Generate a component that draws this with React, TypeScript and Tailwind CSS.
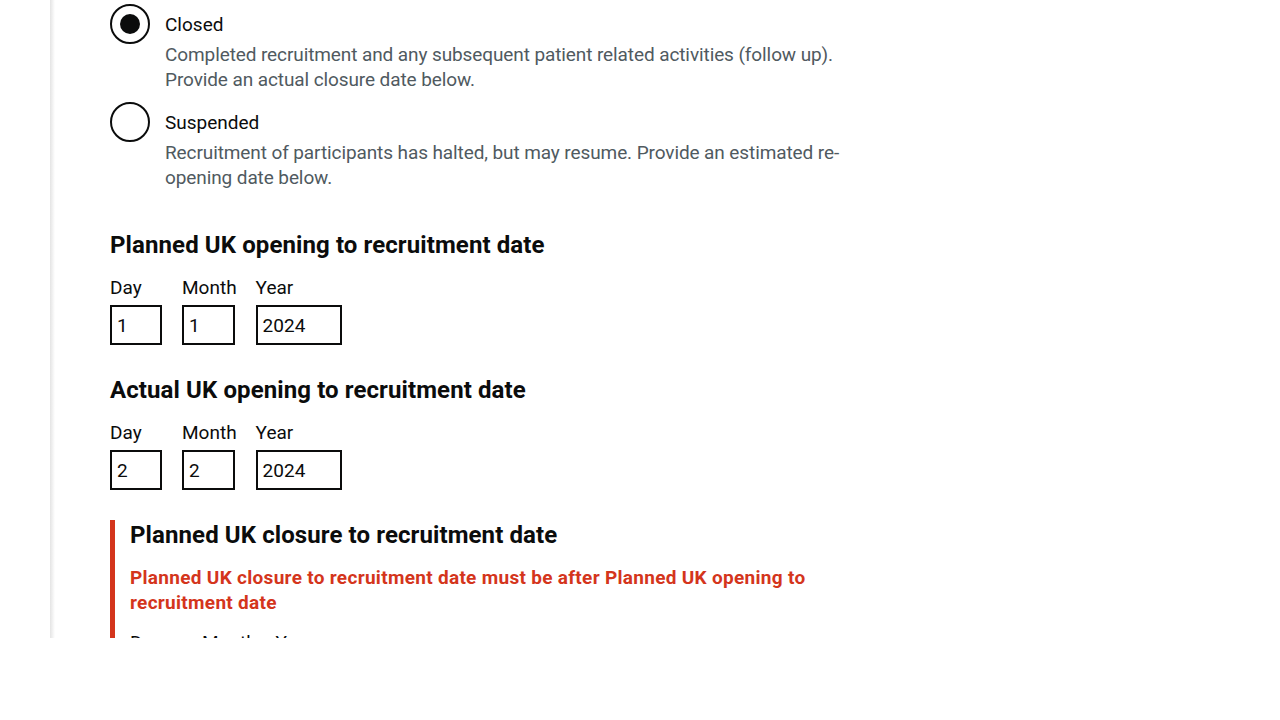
import React from "react";

const font = { fontFamily: "Roboto, 'Noto Sans', Arial, sans-serif" };

function Radio({ checked, label, hint, className = "" }: { checked?: boolean; label: string; hint: string; className?: string }) {
  return (
    <div className={`flex ${className}`}>
      <div className="w-[40px] h-[40px] shrink-0 rounded-full border-2 border-[#0b0c0c] flex items-center justify-center">
        {checked && <div className="w-[20px] h-[20px] rounded-full bg-[#0b0c0c]" />}
      </div>
      <div className="pl-[15px]">
        <div className="pt-[8px] pb-[5px] text-[19px] leading-[25px] text-[#0b0c0c]">{label}</div>
        <div className="text-[19px] leading-[25px] tracking-[-0.1px] text-[#505a5f]">{hint}</div>
      </div>
    </div>
  );
}

function DateInputs({ day, month, year }: { day: string; month: string; year: string }) {
  const items = [
    { l: "Day", v: day, w: "w-[52px]" },
    { l: "Month", v: month, w: "w-[53px]" },
    { l: "Year", v: year, w: "w-[86px]" },
  ];
  return (
    <div className="flex">
      {items.map((it, i) => (
        <div key={it.l} className={`flex flex-col ${i === 0 ? "mr-[20px]" : i === 1 ? "mr-[19px]" : ""}`}>
          <div className="text-[19px] leading-[25px] text-[#0b0c0c] mb-[5px]">{it.l}</div>
          <div className={`${it.w} h-[40px] border-2 border-[#0b0c0c] px-[5px] text-[19px] leading-[37px] text-[#0b0c0c]`}>{it.v}</div>
        </div>
      ))}
    </div>
  );
}

export default function App() {
  return (
    <div className="w-full h-[720px] bg-white" style={font}>
      <div className="ml-[50px] h-[638px] overflow-hidden relative flex">
        <div className="w-[5px] shrink-0 bg-gradient-to-r from-[#e4e4e4] to-white" />
        <div className="pl-[55px] pt-[4px] w-[820px]">
          <Radio
            checked
            label="Closed"
            hint="Completed recruitment and any subsequent patient related activities (follow up). Provide an actual closure date below."
            className="mb-[10px]"
          />
          <Radio
            label="Suspended"
            hint="Recruitment of participants has halted, but may resume. Provide an estimated re-opening date below."
          />
          <div className="mt-[40px]">
            <h2 className="text-[24px] leading-[30px] font-bold tracking-[0.1px] text-[#0b0c0c] mb-[15px]">Planned UK opening to recruitment date</h2>
            <DateInputs day="1" month="1" year="2024" />
          </div>
          <div className="mt-[30px]">
            <h2 className="text-[24px] leading-[30px] font-bold tracking-[0.1px] text-[#0b0c0c] mb-[15px]">Actual UK opening to recruitment date</h2>
            <DateInputs day="2" month="2" year="2024" />
          </div>
          <div className="mt-[30px] border-l-[5px] border-[#d4351c] pl-[15px]">
            <h2 className="text-[24px] leading-[30px] font-bold tracking-[0.1px] text-[#0b0c0c] mb-[15px]">Planned UK closure to recruitment date</h2>
            <p className="text-[19px] leading-[25px] font-bold tracking-[0.3px] text-[#d4351c] mb-[15px]">
              Planned UK closure to recruitment date must be after Planned UK opening to recruitment date
            </p>
            <DateInputs day="" month="" year="" />
          </div>
        </div>
      </div>
    </div>
  );
}
